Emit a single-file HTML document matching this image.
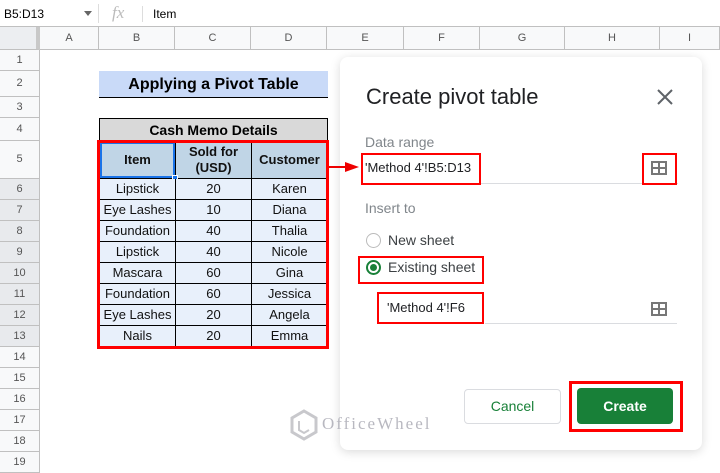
<!DOCTYPE html><html><head><style>
*{margin:0;padding:0;box-sizing:border-box}
body{width:720px;height:465px;overflow:hidden;background:#fff;font-family:"Liberation Sans",Arial,sans-serif;position:relative}
.a{position:absolute}
.hc{position:absolute;top:27px;height:23px;background:#f8f9fa;border-right:1px solid #c0c0c0;border-bottom:1px solid #c0c0c0;font-size:11px;color:#555;text-align:center;line-height:22px}
.rh{position:absolute;left:0;width:40px;background:#f8f9fa;border-right:1px solid #c0c0c0;border-bottom:1px solid #c0c0c0;font-size:11px;color:#555;text-align:center}
.c{position:absolute;background:#e8f0fb;border-right:1px solid #000;border-bottom:1px solid #000;font-size:13px;color:#111;text-align:center;height:21px;line-height:20px}
.red{position:absolute;border:2px solid #f00}
</style></head><body>
<div class="a" style="left:0;top:0;width:720px;height:27px;border-bottom:1px solid #c0c0c0;font-size:12px">
<div class="a" style="left:4px;top:7px">B5:D13</div>
<div class="a" style="left:84px;top:11px;width:0;height:0;border:4px solid transparent;border-top:5px solid #666"></div>
<div class="a" style="left:98px;top:4px;width:1px;height:19px;background:#ddd"></div>
<div class="a" style="left:112px;top:3px;font-family:'Liberation Serif',serif;font-style:italic;color:#bbb;font-size:17px">fx</div>
<div class="a" style="left:142px;top:6px;width:1px;height:16px;background:#ddd"></div>
<div class="a" style="left:153px;top:7px">Item</div>
</div>
<div class="hc" style="left:0;width:40px;background:#eceef1;border-right:4px solid #c8c8c8"></div>
<div class="hc" style="left:40px;width:59px">A</div>
<div class="hc" style="left:99px;width:76px">B</div>
<div class="hc" style="left:175px;width:76px">C</div>
<div class="hc" style="left:251px;width:76px">D</div>
<div class="hc" style="left:327px;width:77px">E</div>
<div class="hc" style="left:404px;width:76px">F</div>
<div class="hc" style="left:480px;width:85px">G</div>
<div class="hc" style="left:565px;width:95px">H</div>
<div class="hc" style="left:660px;width:60px">I</div>
<div class="rh" style="top:50px;height:21px;line-height:20px">1</div>
<div class="rh" style="top:71px;height:26px;line-height:25px">2</div>
<div class="rh" style="top:97px;height:21px;line-height:20px">3</div>
<div class="rh" style="top:118px;height:23px;line-height:22px">4</div>
<div class="rh" style="top:141px;height:38px;line-height:37px">5</div>
<div class="rh" style="top:179px;height:21px;line-height:20px;background:#e8eaed">6</div>
<div class="rh" style="top:200px;height:21px;line-height:20px;background:#e8eaed">7</div>
<div class="rh" style="top:221px;height:21px;line-height:20px;background:#e8eaed">8</div>
<div class="rh" style="top:242px;height:21px;line-height:20px;background:#e8eaed">9</div>
<div class="rh" style="top:263px;height:21px;line-height:20px;background:#e8eaed">10</div>
<div class="rh" style="top:284px;height:21px;line-height:20px;background:#e8eaed">11</div>
<div class="rh" style="top:305px;height:21px;line-height:20px;background:#e8eaed">12</div>
<div class="rh" style="top:326px;height:21px;line-height:20px;background:#e8eaed">13</div>
<div class="rh" style="top:347px;height:21px;line-height:20px">14</div>
<div class="rh" style="top:368px;height:21px;line-height:20px">15</div>
<div class="rh" style="top:389px;height:21px;line-height:20px">16</div>
<div class="rh" style="top:410px;height:21px;line-height:20px">17</div>
<div class="rh" style="top:431px;height:21px;line-height:20px">18</div>
<div class="rh" style="top:452px;height:21px;line-height:20px">19</div>
<div class="a" style="left:99px;top:71px;width:229px;height:27px;background:#c9daf8;border-bottom:1px solid #000;font-weight:bold;font-size:16px;text-align:center;line-height:27px">Applying a Pivot Table</div>
<div class="a" style="left:99px;top:118px;width:229px;height:23px;background:#d9d9d9;border:1px solid #000;font-weight:bold;font-size:14px;text-align:center;line-height:22px">Cash Memo Details</div>
<div class="c" style="left:99px;top:141px;width:77px;height:38px;line-height:37px;background:#c0d5e6;border-left:1px solid #000;font-weight:bold">Item</div>
<div class="c" style="left:176px;top:141px;width:76px;height:38px;line-height:16px;padding-top:3px;background:#c0d5e6;font-weight:bold">Sold for<br>(USD)</div>
<div class="c" style="left:252px;top:141px;width:76px;height:38px;line-height:37px;background:#c0d5e6;font-weight:bold">Customer</div>
<div class="a" style="left:100px;top:142px;width:75px;height:36px;border:2px solid #1a73e8"></div>
<div class="a" style="left:172px;top:175px;width:6px;height:6px;background:#1a73e8;border:1px solid #fff"></div>
<div id="rows"></div>
<script>
var d=[["Lipstick",20,"Karen"],["Eye Lashes",10,"Diana"],["Foundation",40,"Thalia"],["Lipstick",40,"Nicole"],["Mascara",60,"Gina"],["Foundation",60,"Jessica"],["Eye Lashes",20,"Angela"],["Nails",20,"Emma"]],h="";
d.forEach(function(r,i){var t=179+i*21;h+='<div class="c" style="left:99px;top:'+t+'px;width:77px;border-left:1px solid #000">'+r[0]+'</div><div class="c" style="left:176px;top:'+t+'px;width:76px">'+r[1]+'</div><div class="c" style="left:252px;top:'+t+'px;width:76px">'+r[2]+'</div>';});
document.getElementById("rows").innerHTML=h;
</script>
<div class="red" style="left:97px;top:140px;width:232px;height:209px;border-width:3px"></div>
<div class="a" style="left:340px;top:57px;width:362px;height:393px;background:#fff;border-radius:8px;box-shadow:0 2px 10px rgba(0,0,0,.15)"></div>
<div class="a" style="left:329px;top:166px;width:20px;height:2px;background:#e00"></div>
<div class="a" style="left:345px;top:162px;width:0;height:0;border-top:5px solid transparent;border-bottom:5px solid transparent;border-left:14px solid #e00"></div>
<div class="a" style="left:366px;top:84px;font-size:22px;color:#202124">Create pivot table</div>
<svg class="a" style="left:657px;top:89px" width="16" height="16"><path d="M1 1L15 15M15 1L1 15" stroke="#5f6368" stroke-width="2"/></svg>
<div class="a" style="left:365px;top:134px;font-size:14px;color:#80868b">Data range</div>
<div class="a" style="left:365px;top:160px;font-size:13px;color:#202124">'Method 4'!B5:D13</div>
<div class="a" style="left:363px;top:183px;width:315px;height:1px;background:#dadce0"></div>
<div class="red" style="left:361px;top:153px;width:120px;height:32px"></div>
<div class="red" style="left:642px;top:153px;width:35px;height:32px"></div>
<svg class="a" style="left:651px;top:161px" width="16" height="14"><rect x="1" y="1" width="14" height="12" fill="none" stroke="#777" stroke-width="2"/><path d="M8 1V13M1 7H15" stroke="#777" stroke-width="2"/></svg>
<div class="a" style="left:365px;top:200px;font-size:14px;color:#80868b">Insert to</div>
<div class="a" style="left:366px;top:233px;width:15px;height:15px;border:1px solid #bbb;border-radius:50%"></div>
<div class="a" style="left:388px;top:232px;font-size:14px;color:#3c4043">New sheet</div>
<div class="a" style="left:366px;top:260px;width:15px;height:15px;border:2px solid #188038;border-radius:50%"></div>
<div class="a" style="left:370px;top:264px;width:7px;height:7px;background:#188038;border-radius:50%"></div>
<div class="a" style="left:388px;top:259px;font-size:14px;color:#3c4043">Existing sheet</div>
<div class="red" style="left:358px;top:256px;width:126px;height:28px"></div>
<div class="a" style="left:387px;top:300px;font-size:13px;color:#202124">'Method 4'!F6</div>
<div class="a" style="left:485px;top:323px;width:192px;height:1px;background:#dadce0"></div>
<div class="red" style="left:377px;top:292px;width:107px;height:32px"></div>
<svg class="a" style="left:651px;top:302px" width="16" height="14"><rect x="1" y="1" width="14" height="12" fill="none" stroke="#777" stroke-width="2"/><path d="M8 1V13M1 7H15" stroke="#777" stroke-width="2"/></svg>
<div class="a" style="left:464px;top:389px;width:97px;height:35px;border:1px solid #dadce0;border-radius:4px;color:#188038;font-size:14px;text-align:center;line-height:33px">Cancel</div>
<div class="a" style="left:577px;top:388px;width:96px;height:36px;background:#188038;border-radius:4px;color:#fff;font-weight:bold;font-size:14px;text-align:center;line-height:36px">Create</div>
<div class="red" style="left:569px;top:381px;width:114px;height:51px;border-width:3px"></div>
<svg class="a" style="left:289px;top:409px" width="30" height="32"><path d="M15 2L27 9V23L15 30L3 23V9Z" fill="none" stroke="#c8c8cc" stroke-width="3"/><path d="M10 12V21L15 24L20 21" fill="none" stroke="#c8c8cc" stroke-width="2"/></svg>
<div class="a" style="left:322px;top:414px;font-family:'Liberation Serif',serif;font-size:17px;letter-spacing:2px;color:#b8b8c0">OfficeWheel</div>
</body></html>
